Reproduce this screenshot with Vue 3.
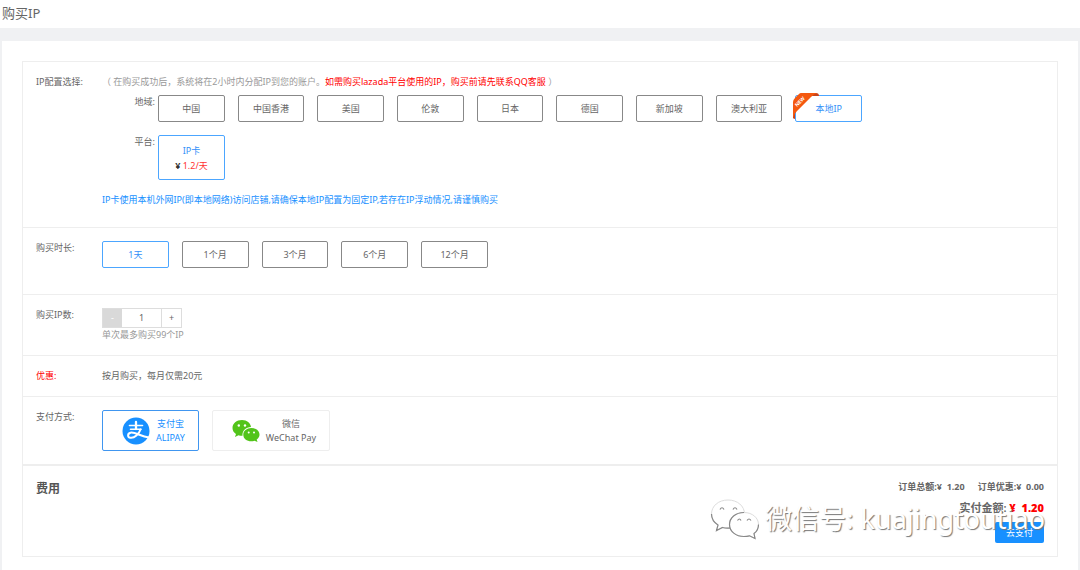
<script setup>
import { ref } from 'vue'

const regions = ['中国', '中国香港', '美国', '伦敦', '日本', '德国', '新加坡', '澳大利亚', '本地IP']
const durations = ['1天', '1个月', '3个月', '6个月', '12个月']
const region = ref('本地IP')
const duration = ref('1天')
const pay = ref('alipay')
const count = ref(1)
</script>

<template>
  <div class="page">
    <header class="header"><h1>购买IP</h1></header>
    <main class="panel">
      <form class="card" @submit.prevent>
        <section class="row config">
          <span class="label">IP配置选择:</span>
          <div class="body">
            <p class="hint">（ 在购买成功后，系统将在2小时内分配IP到您的账户。<em>如需购买lazada平台使用的IP，购买前请先联系QQ客服</em> ）</p>
            <div class="sub">
              <span class="sublabel">地域:</span>
              <div class="options nine">
                <button v-for="r in regions" :key="r" type="button" class="opt" :class="{ on: region === r }" @click="region = r">
                  {{ r }}
                  <svg v-if="r === '本地IP'" class="ribbon" viewBox="0 0 26 27" width="26" height="27" aria-hidden="true">
                    <path d="M20 0 H23 Q26 0 26 3 H19 Z M0 20 L2 18 V25 Q2 27 0 25 Z" fill="#c8431a" />
                    <path d="M8 0 H24 Q21 1 18 4 L4 18 Q1 21 0 25 V9 Q0 7 2 5 L6 1 Q7 0 8 0 Z" fill="#f4580f" />
                    <text x="0" y="0" transform="translate(4 14) rotate(-45)" font-size="5" font-weight="700" fill="#fff">NEW</text>
                  </svg>
                </button>
              </div>
            </div>
            <div class="sub">
              <span class="sublabel">平台:</span>
              <button type="button" class="opt on plan">
                <span>IP卡</span>
                <span class="price"><b>¥</b> 1.2/天</span>
              </button>
            </div>
            <p class="note">IP卡使用本机外网IP(即本地网络)访问店铺,请确保本地IP配置为固定IP,若存在IP浮动情况,请谨慎购买</p>
          </div>
        </section>

        <section class="row duration">
          <span class="label">购买时长:</span>
          <div class="options five">
            <button v-for="d in durations" :key="d" type="button" class="opt" :class="{ on: duration === d }" @click="duration = d">{{ d }}</button>
          </div>
        </section>

        <section class="row quantity">
          <label class="label" for="count">购买IP数:</label>
          <div class="body">
            <div class="stepper">
              <button type="button" class="minus" aria-label="减少" :disabled="count <= 1" @click="count--">-</button>
              <input id="count" v-model.number="count" type="text" />
              <button type="button" aria-label="增加" @click="count++">+</button>
            </div>
            <p class="limit">单次最多购买99个IP</p>
          </div>
        </section>

        <section class="row promo">
          <span class="label red">优惠:</span>
          <p>按月购买，每月仅需20元</p>
        </section>

        <section class="row payment">
          <span class="label">支付方式:</span>
          <div class="pays">
            <button type="button" class="pay" :class="{ on: pay === 'alipay' }" @click="pay = 'alipay'">
              <svg viewBox="0 0 28 28" width="28" height="28" aria-hidden="true">
                <circle cx="14" cy="14" r="13.5" fill="#1890ff" />
                <g fill="none" stroke="#fff" stroke-linecap="round">
                  <path d="M7.5 8.5H20.5M8.5 12.3H19" stroke-width="1.6" />
                  <path d="M14 5V12" stroke-width="2.3" />
                  <path d="M18.5 12.5C17 17 12.5 21.3 8.5 20.8C5.3 20.4 5.3 16.5 8.5 15.7C13 14.8 18 19 27 20.5" stroke-width="2" />
                </g>
              </svg>
              <span>支付宝<br />ALIPAY</span>
            </button>
            <button type="button" class="pay wechat" :class="{ on: pay === 'wechat' }" @click="pay = 'wechat'">
              <svg viewBox="0 0 28 24" width="28" height="24" aria-hidden="true">
                <path d="M10 1C4.5 1 .5 4.5 .5 9C.5 11.5 1.8 13.5 4 15L3 18L6.5 16.3Q8.5 17 10.5 16.8C10 11.5 14 8 19 8C18.5 4 15 1 10 1Z" fill="#52c41a" />
                <path d="M19.3 9C14.7 9 11.3 12 11.3 15.7C11.3 19.5 14.7 22.3 19.3 22.3Q21 22.3 22.5 21.8L25.5 23L24.7 20.5C26.5 19.3 27.5 17.5 27.5 15.7C27.5 12 24 9 19.3 9Z" fill="#52c41a" />
                <g fill="#fff"><circle cx="6.8" cy="6.5" r="1.2" /><circle cx="13" cy="6.5" r="1.2" /><circle cx="16.7" cy="13.5" r="1" /><circle cx="22" cy="13.5" r="1" /></g>
              </svg>
              <span>微信<br />WeChat Pay</span>
            </button>
          </div>
        </section>

        <section class="fees">
          <h2>费用</h2>
          <div class="totals">
            <p class="sums"><span>订单总额:¥&nbsp; 1.20</span><span>订单优惠:¥&nbsp; 0.00</span></p>
            <p class="due">实付金额: <strong>¥&nbsp; 1.20</strong></p>
            <button type="submit" class="submit">去支付</button>
          </div>
          <div class="mark">
            <svg viewBox="0 0 50 42" width="50" height="42" aria-hidden="true">
              <g fill="#fff" stroke="#ddd" stroke-width="1">
                <path d="M18 2C8.5 2 1.5 8 1.5 16C1.5 20.5 4 24.5 8 27L6.5 32.5L12.5 29.5Q16 30.5 20 30C28 29 34.5 23 34.5 16C34.5 8 27.5 2 18 2Z" />
                <path d="M34 14.500C25.5 14.5 19.5 20 19.5 26.5C19.5 33.5 26 38.5 34 38.5Q37 38.5 39.5 37.8L45 40.5L44 35.5C47 33.5 48.5 30 48.5 26.5C48.5 20 42.5 14.5 34 14.5Z" />
              </g>
              <g fill="none" stroke="#888" stroke-width="1.2">
                <path d="M1.5 16C1.5 20.5 4 24.5 8 27L6.5 32.5L12.5 29.5Q16 30.5 20 30M34 14.5C25.5 14.5 19.5 20 19.5 26.5C19.5 33.5 26 38.5 34 38.5Q37 38.5 39.5 37.8L45 40.5L44 35.5C47 33.5 48.5 30 48.5 26.5" />
                <path d="M10 11.5Q12 8 14 11.5M23 11.5Q25 8 27 11.5M27.5 22.5Q29.5 19.5 31 22.5M37 22.5Q39 19.5 41 22.5" />
              </g>
            </svg>
            <span>微信号: kuajingtoutiao</span>
          </div>
        </section>
      </form>
    </main>
  </div>
</template>

<style>
body {
  margin: 0;
  background: #f0f1f3;
}
</style>

<style scoped>
.page {
  font: 9px/14px "Noto Sans", "Noto Sans CJK SC", sans-serif;
  color: #666;
}
h1, h2, p { margin: 0; font-weight: 400; }
button, input { font: inherit; color: inherit; padding: 0; box-sizing: border-box; }
button { cursor: pointer; }
.header {
  height: 28px;
  padding: 0 2px;
  background: #fff;
  box-sizing: border-box;
}
h1 { font-size: 13px; line-height: 26px; }
.panel {
  margin: 13px 2px 0;
  padding: 20px;
  background: #fff;
}
.card { border: 1px solid #eee; }
.row {
  display: flex;
  align-items: flex-start;
  padding: 13px;
  border-bottom: 1px solid #eee;
}
.label { flex: none; width: 66px; }
.body { flex: 1; min-width: 0; }
.red { color: #f00; }

.config { padding-bottom: 20px; }
.hint { margin-bottom: 6px; color: #999; }
.hint em { font-style: normal; color: #f00; }
.sub { display: flex; align-items: flex-start; margin-bottom: 13px; }
.sublabel { flex: none; width: 53px; margin-right: 3px; text-align: right; }
.options { display: grid; flex: 1; gap: 13px; }
.nine { grid-template-columns: repeat(9, 1fr); max-width: 704px; }
.five { grid-template-columns: repeat(5, 1fr); max-width: 386px; }
.opt {
  position: relative;
  height: 27px;
  background: #fff;
  border: 1px solid #888;
  border-radius: 2px;
}
.opt.on { border-color: #4ca6ff; color: #3390f8; }
.ribbon { position: absolute; left: -3px; top: -3px; }
.plan { width: 67px; height: 45px; }
.plan span { display: block; line-height: 15px; }
.plan .price { color: #f33; }
.price b { color: #333; }
.note { color: #1890ff; }

.duration { padding-bottom: 26px; }

.stepper {
  display: flex;
  width: 80px;
  height: 20px;
  border: 1px solid #ddd;
  box-sizing: border-box;
}
.stepper button { width: 19px; border: 0; background: #fff; }
.stepper .minus { background: #d9d9d9; color: #fff; }
.stepper input {
  flex: 1;
  min-width: 0;
  border: 0;
  border-right: 1px solid #ddd;
  text-align: center;
}
.limit { color: #999; }

.payment { border-bottom-width: 2px; }
.pays { display: flex; gap: 13px; }
.pay {
  display: flex;
  align-items: center;
  gap: 6px;
  height: 41px;
  padding: 0 13px 0 19px;
  background: #fff;
  border: 1px solid #eee;
  border-radius: 2px;
}
.pay.on { border-color: #4096f0; color: #1890ff; }

.fees {
  position: relative;
  display: flex;
  justify-content: space-between;
  padding: 13px;
}
h2 { font-size: 12px; line-height: 20px; font-weight: 700; color: #555; }
.totals { text-align: right; }
.sums { display: flex; gap: 13px; font-weight: 700; line-height: 16px; margin-bottom: 5px; }
.sums span { white-space: nowrap; }
.due { font-size: 11px; line-height: 16px; font-weight: 600; }
.due strong { color: #f00; }
.submit {
  display: block;
  width: 49px;
  height: 21px;
  margin: 6px 0 0 auto;
  background: #1890ff;
  border: 0;
  border-radius: 2px;
  color: #fff;
}
.mark {
  position: absolute;
  right: 12px;
  top: 32px;
  display: flex;
  align-items: center;
  gap: 5px;
  pointer-events: none;
  font-size: 27px;
  line-height: 42px;
  color: #fff;
  white-space: nowrap;
  text-shadow: 1px 1px 1px #777;
}
</style>
